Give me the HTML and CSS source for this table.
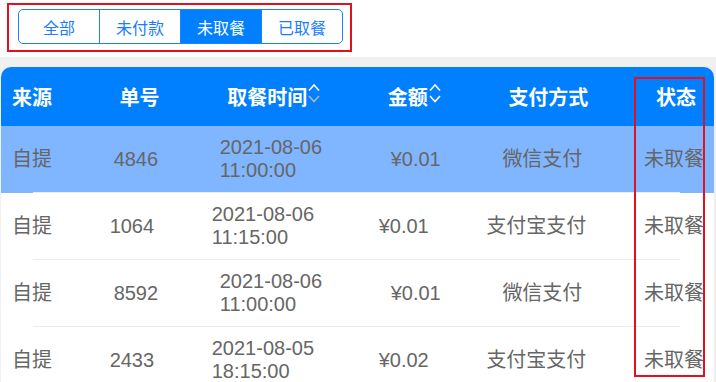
FILE: index.html
```html
<!DOCTYPE html>
<html lang="zh-CN">
<head>
<meta charset="utf-8">
<title>订单列表</title>
<link rel="stylesheet" href="styles.css">
</head>
<body>
<div class="page">
  <div class="tabs-bar">
    <div class="seg">
      <div class="seg-item">全部</div>
      <div class="seg-item">未付款</div>
      <div class="seg-item active">未取餐</div>
      <div class="seg-item">已取餐</div>
    </div>
  </div>

  <div class="card">
    <div class="thead">
      <div class="th">来源</div>
      <div class="th">单号</div>
      <div class="th">取餐时间<svg class="sort" width="12" height="24" viewBox="0 0 12 24"><polyline points="1,7.5 6,2 11,7.5" fill="none" stroke="#fff" stroke-width="1.6"/><polyline class="off" points="1,13 6,18.5 11,13" fill="none" stroke="#a9b4c4" stroke-width="1.6"/></svg></div>
      <div class="th">金额<svg class="sort" width="12" height="24" viewBox="0 0 12 24"><polyline points="1,7.5 6,2 11,7.5" fill="none" stroke="#fff" stroke-width="1.6"/><polyline points="1,13 6,18.5 11,13" fill="none" stroke="#fff" stroke-width="1.6"/></svg></div>
      <div class="th">支付方式</div>
      <div class="th">状态</div>
    </div>

    <div class="row hl">
      <div class="td">自提</div>
      <div class="td">4846</div>
      <div class="td date"><span>2021-08-06</span><span>11:00:00</span></div>
      <div class="td amount">¥0.01</div>
      <div class="td">微信支付</div>
      <div class="td">未取餐</div>
    </div>
    <div class="row">
      <div class="td">自提</div>
      <div class="td">1064</div>
      <div class="td date"><span>2021-08-06</span><span>11:15:00</span></div>
      <div class="td amount">¥0.01</div>
      <div class="td">支付宝支付</div>
      <div class="td">未取餐</div>
    </div>
    <div class="row">
      <div class="td">自提</div>
      <div class="td">8592</div>
      <div class="td date"><span>2021-08-06</span><span>11:00:00</span></div>
      <div class="td amount">¥0.01</div>
      <div class="td">微信支付</div>
      <div class="td">未取餐</div>
    </div>
    <div class="row">
      <div class="td">自提</div>
      <div class="td">2433</div>
      <div class="td date"><span>2021-08-05</span><span>18:15:00</span></div>
      <div class="td amount">¥0.02</div>
      <div class="td">支付宝支付</div>
      <div class="td">未取餐</div>
    </div>
  </div>

  <div class="mark mark-tabs"></div>
  <div class="mark mark-status"></div>
</div>
</body>
</html>
```

FILE: styles.css
```css
* { box-sizing: border-box; }

html, body {
  margin: 0;
  padding: 0;
}

body {
  background: #f0f0f0;
  font-family: "Liberation Sans", "Noto Sans CJK SC", sans-serif;
  overflow: hidden;
}

.page {
  position: relative;
  height: 382px;
  overflow: hidden;
}

.tabs-bar {
  background: #fff;
  height: 57px;
  padding: 9px 0 0 18px;
}

.seg {
  display: flex;
  width: 325px;
  height: 35px;
  border: 1px solid #1a82ff;
  border-radius: 5px;
  overflow: hidden;
}

.seg-item {
  flex: 1;
  display: flex;
  align-items: center;
  justify-content: center;
  font-family: "Noto Sans CJK SC", sans-serif;
  font-size: 16px;
  color: #1a7dff;
  border-left: 1px solid #1a82ff;
}

.seg-item:first-child { border-left: none; }

.seg-item.active {
  background: #0080ff;
  color: #fff;
}

.card {
  margin: 10px 2px 0 1px;
  background: #fff;
  border-radius: 10px 10px 0 0;
  overflow: hidden;
}

.thead {
  height: 59px;
  background: #0080ff;
  display: flex;
  align-items: center;
  justify-content: space-between;
  padding: 0 18px 0 11px;
}

.th {
  display: flex;
  align-items: center;
  color: #fff;
  font-family: "Noto Sans CJK SC", sans-serif;
  font-weight: 700;
  font-size: 20px;
  line-height: 24px;
}

.sort {
  display: block;
  margin-left: 1px;
  margin-top: -3px;
}

.row {
  display: flex;
  align-items: center;
  justify-content: space-between;
  padding: 10px 10px 11px 11px;
  min-height: 66px;
  color: #666;
  font-size: 20px;
  line-height: 23px;
  background: linear-gradient(#ececec, #ececec) no-repeat left 32px bottom / calc(100% - 66px) 1px;
}

.row.hl {
  background-color: #80b5ff;
}

.td { white-space: nowrap; }

.date {
  display: flex;
  flex-direction: column;
}

.amount { margin-left: 7px; }

.mark {
  position: absolute;
  border: 2px solid #e3101e;
  pointer-events: none;
}

.mark-tabs {
  left: 7px;
  top: 3px;
  width: 345px;
  height: 49px;
}

.mark-status {
  left: 634px;
  top: 77px;
  width: 71px;
  height: 300px;
}
```
